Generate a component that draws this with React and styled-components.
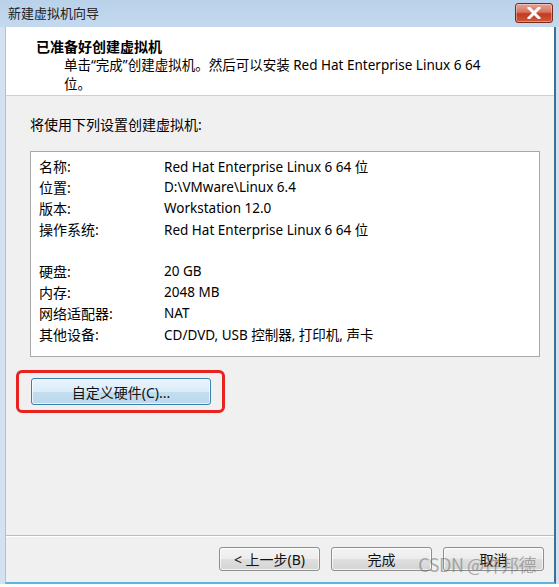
import React from "react";
import styled, {createGlobalStyle} from "styled-components";

const GlobalStyle = createGlobalStyle`
  html, body {
    margin: 0;
    padding: 0;
    background: #ffffff;
  }
  body {
    font-family: "Noto Sans", "Noto Sans CJK SC", sans-serif;
    font-size: 14px;
    color: #000;
  }
`;

const settings = [
    {label: "名称:", value: "Red Hat Enterprise Linux 6 64 位"},
    {label: "位置:", value: "D:\\VMware\\Linux 6.4"},
    {label: "版本:", value: "Workstation 12.0"},
    {label: "操作系统:", value: "Red Hat Enterprise Linux 6 64 位"},
    {gap: true},
    {label: "硬盘:", value: "20 GB"},
    {label: "内存:", value: "2048 MB"},
    {label: "网络适配器:", value: "NAT"},
    {label: "其他设备:", value: "CD/DVD, USB 控制器, 打印机, 声卡"},
];

export default function App() {
    return (
        <>
            <GlobalStyle/>
            <Window>
                <TitleBar>
                    <Title>新建虚拟机向导</Title>
                    <CloseButton>
                        <svg width="14" height="12" viewBox="0 0 14 12">
                            <path d="M2 1 L12 11 M12 1 L2 11" stroke="#fff" strokeWidth="3" strokeLinecap="square"/>
                        </svg>
                    </CloseButton>
                </TitleBar>
                <Client>
                    <Header>
                        <HeaderTitle>已准备好创建虚拟机</HeaderTitle>
                        <HeaderText>
                            单击“完成”创建虚拟机。然后可以安装 Red Hat Enterprise Linux 6 64<br/>位。
                        </HeaderText>
                    </Header>
                    <Body>
                        <Caption>将使用下列设置创建虚拟机:</Caption>
                        <SettingsBox>
                            {settings.map((row, i) =>
                                row.gap ? <Spacer key={i}/> :
                                    <Row key={i}>
                                        <Label>{row.label}</Label>
                                        <Value>{row.value}</Value>
                                    </Row>
                            )}
                        </SettingsBox>
                        <Highlight>
                            <Button $focused $width={180} $height={27}>自定义硬件(C)...</Button>
                        </Highlight>
                    </Body>
                    <Footer>
                        <Button $width={101}>&lt; 上一步(B)</Button>
                        <Button $width={101}>完成</Button>
                        <Button $width={101}>取消</Button>
                    </Footer>
                </Client>
                <Watermark>CSDN @许邦德</Watermark>
            </Window>
        </>
    );
}

const Window = styled.div`
  position: relative;
  width: 559px;
  height: 587px;
  box-sizing: border-box;
  background: #d3e2f2;
  display: flex;
  flex-direction: column;
  border-bottom: 3px solid #fafcfe;
  overflow: hidden;
`;

const TitleBar = styled.div`
  height: 27px;
  flex: none;
  display: flex;
  align-items: center;
  justify-content: space-between;
  padding: 0 6px 0 8px;
  background: linear-gradient(#b9d1ea, #c4d9ee);
`;

const Title = styled.span`
  font-family: "Noto Sans CJK SC", sans-serif;
  font-size: 13px;
  color: #222;
  margin-top: -2px;
`;

const CloseButton = styled.div`
  width: 38px;
  height: 20px;
  box-sizing: border-box;
  margin-top: -2px;
  border: 1px solid #7a2a1c;
  border-radius: 3px;
  display: flex;
  align-items: center;
  justify-content: center;
  background: linear-gradient(#e6a393 0%, #d67560 45%, #c2391e 55%, #cf5a3c 100%);
  box-shadow: inset 0 0 0 1px rgba(255, 255, 255, 0.35);
`;

const Client = styled.div`
  flex: 1;
  display: flex;
  flex-direction: column;
  margin: 0 3px 0 5px;
  border-left: 1px solid #a9c3de;
  border-right: 2px solid #3f6f92;
  border-bottom: 2px solid #5bb5dc;
  background: #f0f0f0;
`;

const Header = styled.div`
  height: 69px;
  flex: none;
  box-sizing: border-box;
  background: #ffffff;
  border-bottom: 1px solid #d0d0d0;
  padding: 9px 0 0 30px;
`;

const HeaderTitle = styled.div`
  font-family: "Noto Sans CJK SC", sans-serif;
  font-weight: 700;
  font-size: 14px;
  line-height: 20px;
`;

const HeaderText = styled.div`
  margin-left: 28px;
  line-height: 19px;
  font-size: 13.5px;
`;

const Body = styled.div`
  flex: 1;
  display: flex;
  flex-direction: column;
  padding: 19px 14px 0 24px;
  border-bottom: 1px solid #bdbdbd;
  box-shadow: 0 1px 0 #ffffff;
`;

const Caption = styled.div`
  line-height: 20px;
`;

const SettingsBox = styled.div`
  margin-top: 16px;
  height: 206px;
  box-sizing: border-box;
  background: #ffffff;
  border: 1px solid #a8a8a8;
  padding: 3px 0 0 8px;
`;

const Row = styled.div`
  display: flex;
  height: 21px;
  align-items: center;
`;

const Spacer = styled.div`
  height: 21px;
`;

const Label = styled.span`
  width: 125px;
  flex: none;
`;

const Value = styled.span`
  white-space: nowrap;
  font-size: 13.5px;
`;

const Highlight = styled.div`
  align-self: flex-start;
  margin: 13px 0 0 -14px;
  padding: 5px 11px 5px 12px;
  border: 3px solid #e8231f;
  border-radius: 6px;
`;

const Button = styled.div`
  width: ${p => p.$width}px;
  height: ${p => p.$height || 24}px;
  box-sizing: border-box;
  display: flex;
  align-items: center;
  justify-content: center;
  border-radius: 3px;
  border: 1px solid ${p => p.$focused ? "#3c7fb1" : "#8e8f8f"};
  background: ${p => p.$focused
          ? "linear-gradient(#eaf5fc 0%, #d9ecf9 50%, #c3deef 51%, #bcd8ec 100%)"
          : "linear-gradient(#f4f4f4 0%, #ececec 50%, #dfdfdf 51%, #d4d4d4 100%)"};
  box-shadow: inset 0 0 0 1px rgba(255, 255, 255, 0.7);
  font-size: 14px;
  color: #111;
`;

const Footer = styled.div`
  height: 46px;
  flex: none;
  display: flex;
  justify-content: flex-end;
  align-items: center;
  gap: 11px;
  padding-right: 10px;
`;

const Watermark = styled.div`
  position: absolute;
  right: 23px;
  bottom: 7px;
  font-family: "Noto Sans CJK SC", sans-serif;
  font-size: 18px;
  color: rgba(110, 110, 110, 0.55);
  letter-spacing: -0.5px;
`;
